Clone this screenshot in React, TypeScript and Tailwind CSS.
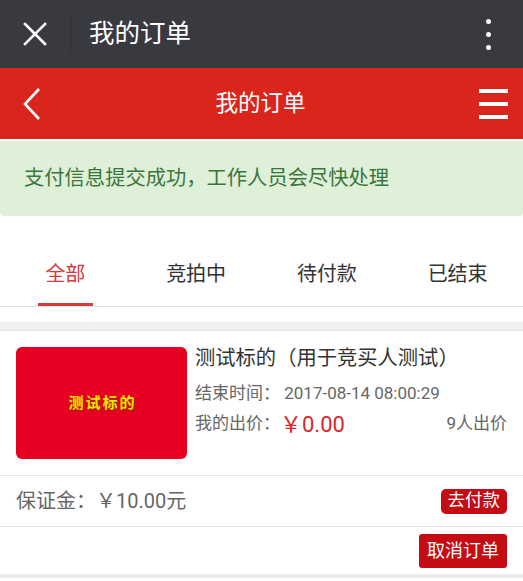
import React from "react";

export default function App() {
  const font = { fontFamily: 'Roboto, "Noto Sans CJK SC", sans-serif' };
  return (
    <div className="w-[523px] h-[581px] bg-white overflow-hidden" style={font}>
      {/* WeChat top bar */}
      <div className="h-[68px] bg-[#393a3f] flex items-center">
        <div className="w-[70px] h-full flex items-center justify-center">
          <svg width="24" height="24" viewBox="0 0 24 24">
            <path d="M2 2 L22 22 M22 2 L2 22" stroke="white" strokeWidth="2.6" strokeLinecap="square" />
          </svg>
        </div>
        <div className="w-px h-[36px] bg-[#2e2f33]" />
        <div className="ml-[18px] text-white text-[25.5px] leading-none flex-1">我的订单</div>
        <div className="w-[40px] mr-[15px] flex flex-col items-center gap-[8px]">
          <div className="w-[5px] h-[5px] rounded-full bg-white" />
          <div className="w-[5px] h-[5px] rounded-full bg-white" />
          <div className="w-[5px] h-[5px] rounded-full bg-white" />
        </div>
      </div>
      {/* Red header */}
      <div className="h-[71px] bg-[#da251d] flex items-center justify-between relative">
        <div className="pl-[22px]">
          <svg width="20" height="32" viewBox="0 0 20 32">
            <path d="M17 1 L3 16 L17 31" stroke="white" strokeWidth="2.6" fill="none" />
          </svg>
        </div>
        <div className="text-white text-[22.5px] leading-none">我的订单</div>
        <div className="pr-[15px] flex flex-col gap-[9px]">
          <div className="w-[29px] h-[4px] bg-white" />
          <div className="w-[29px] h-[4px] bg-white" />
          <div className="w-[29px] h-[4px] bg-white" />
        </div>
      </div>
      {/* Alert */}
      <div className="mt-[2px] h-[75px] bg-[#dff0d8] rounded-b-[4px] flex items-center pl-[24px] text-[#3c763d] text-[20.3px]">
        支付信息提交成功，工作人员会尽快处理
      </div>
      {/* Tabs */}
      <div className="h-[91px] flex border-b border-[#e0e0e0]">
        {["全部", "竞拍中", "待付款", "已结束"].map((t, i) => (
          <div key={t} className="flex-1 flex flex-col items-center justify-end">
            <div className={`text-[20px] leading-none mb-[19px] ${i === 0 ? "text-[#d9393a]" : "text-[#333]"}`}>
              {t}
            </div>
            <div className={`h-[3px] w-[55px] ${i === 0 ? "bg-[#d9393a]" : "bg-transparent"}`} />
          </div>
        ))}
      </div>
      <div className="h-[15px]" />
      <div className="h-[9px] bg-[#efefef] border-b border-[#e4e4e4]" />
      {/* Card */}
      <div className="flex pl-[16px] pr-[16px] pt-[16px] pb-[16px] border-b border-[#e5e5e5]">
        <div className="w-[171px] h-[112px] rounded-[6px] bg-[#e60021] flex items-center justify-center shrink-0">
          <span className="text-[#ffe000] text-[15px] font-bold tracking-[2px] pl-[2px]" style={{ textShadow: "1px 1px 1px #7a3a00" }}>
            测试标的
          </span>
        </div>
        <div className="flex-1 ml-[8px] flex flex-col">
          <div className="text-[20.3px] text-[#333] leading-[24px] mt-[-1px]">测试标的（用于竞买人测试）</div>
          <div className="text-[17px] text-[#666] leading-[20px] mt-[13px]">
            结束时间：&nbsp;2017-08-14 08:00:29
          </div>
          <div className="flex items-center justify-between mt-[9px] h-[24px]">
            <div className="text-[17px] text-[#666] flex items-center">
              我的出价：<span className="text-[#d9262a] text-[22px]">￥0.00</span>
            </div>
            <div className="text-[17px] text-[#666]">9人出价</div>
          </div>
        </div>
      </div>
      <div className="h-[51px] flex items-center justify-between px-[16px] border-b border-[#e5e5e5]">
        <div className="text-[20px] text-[#666]">保证金：￥10.00元</div>
        <div className="bg-[#c50b13] text-white text-[17.5px] leading-none rounded-[5px] h-[25px] px-[7px] flex items-center">
          去付款
        </div>
      </div>
      <div className="h-[51px] flex items-center justify-end px-[16px] border-b-[4px] border-[#ececec]">
        <div className="bg-[#c50b13] text-white text-[18px] leading-none rounded-[3px] h-[34px] px-[8px] flex items-center">
          取消订单
        </div>
      </div>
    </div>
  );
}
